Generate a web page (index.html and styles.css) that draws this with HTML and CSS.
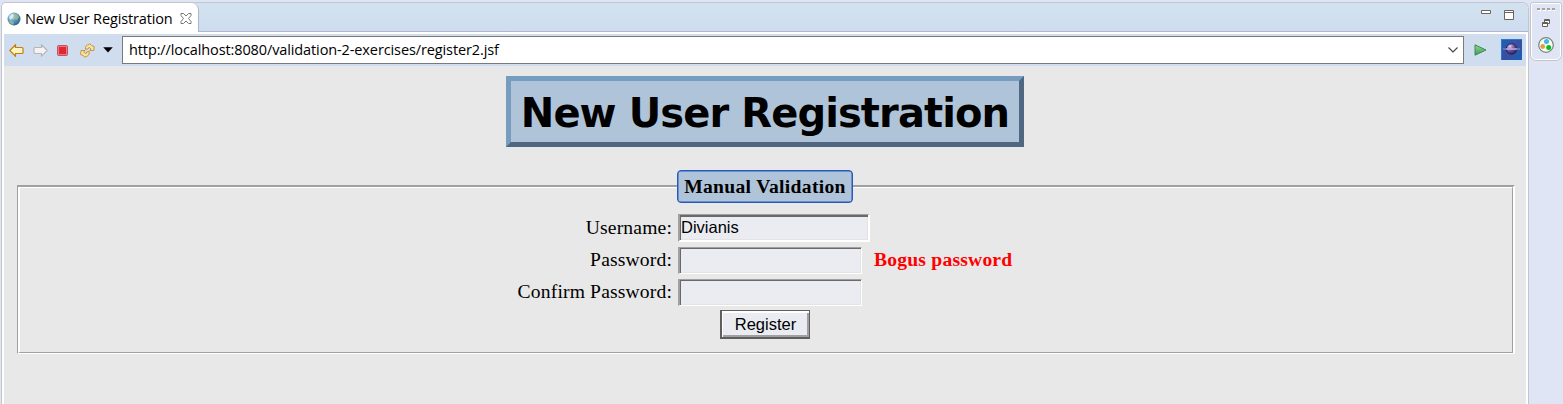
FILE: index.html
```
<!DOCTYPE html>
<html lang="en">
<head>
<meta charset="utf-8">
<title>New User Registration</title>
<link rel="stylesheet" href="styles.css">
</head>
<body>
<div class="workbench">
  <main class="editor">
    <div class="tabs">
      <div class="tab">
        <svg class="globe" width="14" height="14" viewBox="0 0 14 14">
          <defs><radialGradient id="sea" cx=".35" cy=".3" r=".8"><stop offset="0" stop-color="#d5edfa"/><stop offset=".45" stop-color="#5b9cc8"/><stop offset="1" stop-color="#235783"/></radialGradient></defs>
          <circle cx="7" cy="7" r="6.5" fill="url(#sea)"/>
          <path d="M7 1l3 1 2 3-2 3-3-1-1-3zM2 8l4 1 1 3-2 1-3-3z" fill="#a4bd7c" opacity=".75"/>
          <path d="M2 5l3-3 2 1-1 3-3 2z" fill="#d9f0fa" opacity=".8"/>
        </svg>
        <span class="tab-title">New User Registration</span>
        <svg class="close" width="12" height="11" viewBox="0 0 12 11"><path d="M1 .5h2.500L6 3 8.500 .5H11v2L8.500 5.500 11 8.500v2H8.500L6 8 3.500 10.500H1v-2L3.500 5.500 1 2.500z" fill="#fff" stroke="#777"/></svg>
      </div>
      <div class="window-buttons">
        <svg width="10" height="10" viewBox="0 0 10 10"><path d="M.5 .5h9v3h-9z" fill="#fff" stroke="#6b6560"/></svg>
        <svg width="10" height="10" viewBox="0 0 10 10"><path d="M.5 .5h9v9h-9zM1 2.500h8" fill="#fff" stroke="#6b6560"/></svg>
      </div>
    </div>
    <div class="toolbar">
      <svg class="back" width="15" height="13" viewBox="0 0 15 13"><path d="M.8 6.500L6.500 .8V3.500h6.500q1 0 1 1v4q0 1-1 1H6.500v2.700z" fill="#fff3bf" stroke="#bd8110" stroke-width="1.200"/></svg>
      <svg class="forward" width="15" height="13" viewBox="0 0 15 13"><path d="M14.200 6.500L8.500 .8V3.500H2q-1 0-1 1v4q0 1 1 1h6.500v2.700z" fill="#f3f3f3" stroke="#b5b5b5" stroke-width="1.100"/></svg>
      <svg class="stop" width="11" height="11" viewBox="0 0 11 11"><rect x=".5" y=".5" width="10" height="10" rx="1" fill="#ef777c" stroke="#bd5560"/><path d="M2 2h7v7H2z" fill="#df2835"/></svg>
      <svg class="refresh" width="15" height="15" viewBox="0 0 15 15"><g fill="#fbe3a0" stroke="#c18d30" stroke-width=".9" stroke-linejoin="round"><path d="M5.500 6.300Q5 2 9 1.500L9.500.6 11.500 2.500 14.200 3.500 13.800 7.500 9.700 7.500 11 6 9.500 4.500Q8 4.500 8 6z"/><path d="M9.200 8.700Q9.700 13 5.700 13.500L5.200 14.400 3.200 12.500.6 11.500 1 7.500H5L3.700 9 5.200 10.500Q6.700 10.500 6.700 9z"/></g></svg>
      <svg class="menu-arrow" width="10" height="6" viewBox="0 0 10 6"><path d="M.2.300h9.600L5 5.500z" fill="#000"/></svg>
      <div class="address">
        <span class="url">http://localhost:8080/validation-2-exercises/register2.jsf</span>
        <svg width="10" height="6" viewBox="0 0 10 6"><path d="M.5.500L5 5 9.500.500" fill="none" stroke="#444" stroke-width="1.100"/></svg>
      </div>
      <svg class="go" width="13" height="12" viewBox="0 0 13 12"><defs><linearGradient id="green" x2="0" y2="1"><stop stop-color="#9bd298"/><stop offset="1" stop-color="#3a9c50"/></linearGradient></defs><path d="M1 .8L12 6 1 11.200z" fill="url(#green)" stroke="#348f4e"/></svg>
      <svg class="eclipse" width="21" height="21" viewBox="0 0 21 21">
        <defs><linearGradient id="sky" x2="1" y2="1"><stop stop-color="#1762b5"/><stop offset=".5" stop-color="#3a4f9f"/><stop offset="1" stop-color="#1762b5"/></linearGradient><radialGradient id="moon" cx=".35" cy=".25" r=".8"><stop stop-color="#e0cdf0"/><stop offset=".45" stop-color="#765a9e"/><stop offset="1" stop-color="#291a58"/></radialGradient></defs>
        <path d="M0 0h21v21H0z" fill="url(#sky)"/><path d="M.5 20.500V.5h20" fill="none" stroke="#2a7bce"/>
        <circle cx="10.500" cy="10" r="5.300" fill="url(#moon)" stroke="#2b225d"/>
        <path d="M2 10h17" stroke="#8b8ed9" stroke-width="1"/><path d="M5 10h11" stroke="#cdbdf0" stroke-width="1"/>
      </svg>
    </div>
    <div class="page">
      <h1 class="heading">New User Registration</h1>
      <div class="group"><div class="group-inner">
        <div class="legend"><span class="legend-text">Manual Validation</span></div>
        <form class="form">
          <label class="label" for="user"><span>Username:</span></label>
          <input class="field field-wide" id="user" type="text" value="Divianis"><span></span>
          <label class="label" for="pass"><span>Password:</span></label>
          <input class="field" id="pass" type="password"><span class="error">Bogus password</span>
          <label class="label" for="confirm"><span>Confirm Password:</span></label>
          <input class="field" id="confirm" type="password"><span></span>
        </form>
        <button class="submit" type="button"><span>Register</span></button>
      </div></div>
    </div>
  </main>
  <aside class="trim">
    <svg width="18" height="3" viewBox="0 0 18 3"><path d="M0 1h18" stroke="#aaa298" stroke-width="2" stroke-dasharray="3 2"/><path d="M1 2.500h18" stroke="#fff" stroke-dasharray="3 2"/></svg>
    <svg class="restore" width="8" height="8" viewBox="0 0 8 8"><path d="M2.500 .5h5v4h-5zM2.500 1.500h5M.5 3.500h5v4h-5zM.5 4.500h5" fill="#fff" stroke="#655f5a"/></svg>
    <svg class="palette" width="16" height="16" viewBox="0 0 16 16"><circle cx="8" cy="8" r="7.300" fill="#f7fbf4" stroke="#77867b" stroke-width="1.200"/><circle cx="8.500" cy="4.500" r="2.500" fill="#43b5e7"/><circle cx="4.700" cy="9.500" r="2.400" fill="#d8a149"/><circle cx="10.700" cy="10.600" r="2.500" fill="#08bd19"/></svg>
  </aside>
</div>
</body>
</html>
```
FILE: styles.css
```
* { box-sizing: border-box; }
body { margin: 0; background: #dfe5f5; color: #000; overflow: hidden; }
svg { display: block; flex: none; }
.workbench { display: flex; height: 404px; padding: 2px 0 0 1px; }
.editor { width: 1528px; border: 1px solid #c4c5ca; border-bottom: 0; border-radius: 5px 7px 0 0; background: #fff; display: flex; flex-direction: column; padding: 0 2px 0; overflow: hidden; }
.tabs { height: 29px; margin: 0 -2px; display: flex; justify-content: space-between; background: linear-gradient(#d3e2f0, #cdddef); border-bottom: 1px solid #b3b3d0; flex: none; }
.tab { width: 197px; height: 29px; background: #fff; border-right: 1px solid #b3b3d0; border-radius: 4px 7px 0 0; display: flex; align-items: center; padding: 2px 0 0 5px; font: 14.500px/20px "Open Sans", sans-serif; }
.tab-title { width: 150px; margin-left: 4px; white-space: nowrap; letter-spacing: -0.140px; }
.close { margin-left: 5px; }
.window-buttons { display: flex; gap: 13px; padding: 7px 14px 0 0; }
.toolbar { height: 32px; margin-top: 2px; flex: none; background: #cfddee; display: flex; align-items: center; padding-left: 5px; }
.forward { margin-left: 9px; }
.stop { margin-left: 9px; }
.refresh { margin-left: 12px; }
.menu-arrow { margin-left: 8px; }
.address { width: 1342px; height: 28px; margin-left: 9px; padding: 0 5px 0 6px; border: 1px solid #7a7a7a; background: #fff; display: flex; align-items: center; justify-content: space-between; font: 14.500px/20px "Open Sans", sans-serif; flex: none; }
.url { white-space: nowrap; letter-spacing: -0.110px; }
.go { margin-left: 10px; }
.eclipse { margin-left: 14px; position: relative; top: -1px; }
.page { flex: 1; background: #e8e8e8; padding: 10px 11px 0 13px; }
.heading { width: 518px; height: 71px; margin: 0 auto 38px 489px; border: 5px solid; border-color: #769cbf #4f6780 #4f6780 #769cbf; background: #b0c4d9; font: bold 40px/65px Verdana, "DejaVu Sans", sans-serif; letter-spacing: -0.900px; text-align: center; white-space: nowrap; }
.group { width: 1498px; height: 169px; border: solid #a0a0a0; border-width: 2px 2px 1px 1px; border-right-color: #fff; border-bottom-color: #fff; font: 19.600px/22px "Liberation Serif", serif; letter-spacing: 0.150px; }
.group-inner { height: 100%; border: solid #fff; border-width: 1px 1px 1px 2px; border-right-color: #a0a0a0; border-bottom-color: #a0a0a0; display: flex; flex-direction: column; }
.legend { width: 176px; height: 33px; margin: -18px 0 0 657px; border: 1px solid #2459bd; box-shadow: inset 0 0 0 .5px #2459bd; border-radius: 4px; background: #b0c4d9; text-align: center; font-weight: bold; line-height: 31px; letter-spacing: 0.320px; flex: none; }
.form { display: grid; grid-template-columns: 155px 192px 140px; grid-template-rows: 28px 27px 28px; column-gap: 6px; row-gap: 4.500px; margin: 11px 0 0 497px; align-items: center; }
.label { text-align: right; white-space: nowrap; }
.field { width: 184px; height: 27px; border: solid #a0a0a0; border-width: 1px 1px 1px 2px; border-right-color: #fff; border-bottom-color: #fff; box-shadow: inset 1px 1px #696969, inset -1px -1px #e3e3e3; background: #eaecf2; padding: 0 2px 0 1px; font: 16.500px "Liberation Sans", sans-serif; outline: 0; }
.field-wide { width: 192px; height: 28px; border-width: 1px 2px 2px 2px; box-shadow: inset 1px 2px #696969, inset -1px -1px #e3e3e3; }
.error { color: red; font-weight: bold; white-space: nowrap; margin-left: -2px; letter-spacing: 0.200px; }
.submit { width: 90px; height: 29px; margin: 4px 0 0 700px; padding: 0; border: 1px solid #5f5f5f; border-width: 1px 1px 2px 2px; box-shadow: inset 1px 2px #fff, inset -2px -2px #a0a0a0; background: #eaecf2; color: #000; font: 16.500px "Liberation Sans", sans-serif; flex: none; }
.trim { width: 32px; height: 59px; margin-left: 1px; border: 1px solid #c4c5ca; outline: 1px solid #fff; outline-offset: -2px; border-radius: 3px 3px 6px 6px; display: flex; flex-direction: column; align-items: center; padding-top: 5px; flex: none; }
.restore { margin-top: 8px; }
.palette { margin-top: 10px; }
```
